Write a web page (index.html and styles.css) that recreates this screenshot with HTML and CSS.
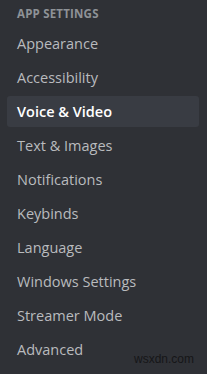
FILE: index.html
```html
<!DOCTYPE html>
<html>
<head>
<meta charset="utf-8">
<link rel="stylesheet" href="styles.css">
</head>
<body>
<nav class="sidebar">
  <div class="header">App Settings</div>
  <div class="item">Appearance</div>
  <div class="item">Accessibility</div>
  <div class="item selected">Voice &amp; Video</div>
  <div class="item">Text &amp; Images</div>
  <div class="item">Notifications</div>
  <div class="item">Keybinds</div>
  <div class="item">Language</div>
  <div class="item">Windows Settings</div>
  <div class="item">Streamer Mode</div>
  <div class="item">Advanced</div>
</nav>
<div class="watermark">wsxdn.com</div>
</body>
</html>
```
FILE: styles.css
```css
html, body {
  margin: 0;
  padding: 0;
  width: 207px;
  height: 374px;
  background: #2f3136;
  overflow: hidden;
  font-family: "Open Sans", "Noto Sans", sans-serif;
}
.sidebar {
  display: flex;
  flex-direction: column;
  padding: 5px 8px 0 7px;
  gap: 3px;
}
.header {
  text-transform: uppercase;
  font-weight: 700;
  font-size: 11.5px;
  color: #8e9297;
  padding: 0 10px;
  height: 18px;
  line-height: 18px;
  margin-bottom: 2px;
  letter-spacing: 0.2px;
}
.item {
  height: 31px;
  line-height: 31px;
  padding: 0 10px;
  font-size: 14.5px;
  color: #b9bbbe;
  border-radius: 3px;
}
.item.selected {
  background: #393c43;
  color: #ffffff;
  font-weight: 600;
}
.watermark {
  position: absolute;
  left: 134px;
  top: 352px;
  font-family: "Liberation Sans", sans-serif;
  font-size: 12px;
  color: #161618;
}
```
